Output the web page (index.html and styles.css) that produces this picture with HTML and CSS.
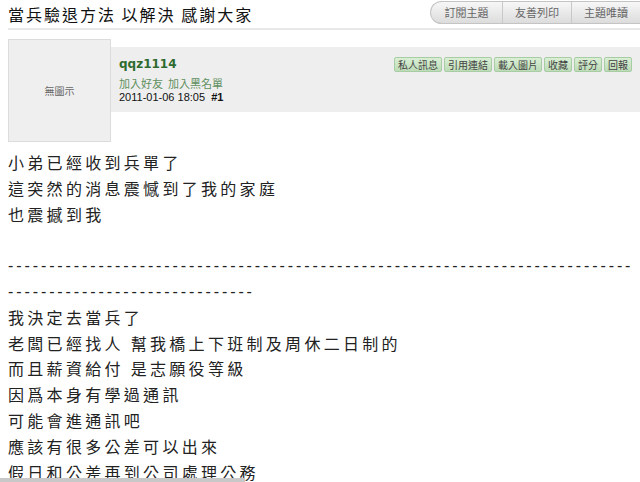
FILE: index.html
```html
<!DOCTYPE html>
<html lang="zh-Hant">
<head>
    <meta charset="UTF-8" />
    <title>當兵驗退方法 以解決 感謝大家</title>
    <link rel="stylesheet" href="styles.css">
</head>
<body>
  <header class="topbar">
    <h1 class="title">當兵驗退方法 以解決 感謝大家</h1>
    <nav class="tabs">
      <a href="#">訂閱主題</a>
      <a href="#">友善列印</a>
      <a href="#">主題唯讀</a>
    </nav>
  </header>
  <div class="rule"></div>

  <section class="post-head">
    <div class="avatar">無圖示</div>
    <div class="info">
      <div class="author">
        <div class="name">qqz1114</div>
        <div class="links"><a href="#">加入好友</a>&nbsp; <a href="#">加入黑名單</a></div>
        <div class="date">2011-01-06 18:05 &nbsp;<b>#1</b></div>
      </div>
      <div class="actions">
        <a href="#">私人訊息</a>
        <a href="#">引用連結</a>
        <a href="#">載入圖片</a>
        <a href="#">收藏</a>
        <a href="#">評分</a>
        <a href="#">回報</a>
      </div>
    </div>
  </section>

  <article class="post-body">
    <p>小弟已經收到兵單了<br>這突然的消息震憾到了我的家庭<br>也震撼到我<br><br></p>
    <p class="dashes">----------------------------------------------------------------------------------------------------------</p>
    <p>我決定去當兵了<br>老闆已經找人 幫我橋上下班制及周休二日制的<br>而且薪資給付 是志願役等級<br>因爲本身有學過通訊<br>可能會進通訊吧<br>應該有很多公差可以出來<br>假日和公差再到公司處理公務</p>
  </article>

  <div class="scrollbar"></div>
</body>
</html>
```

FILE: styles.css
```css
* {
    margin: 0;
    padding: 0;
    box-sizing: border-box;
}

body {
    font-family: "Noto Sans CJK TC", sans-serif;
    background: #fff;
    color: #222;
    padding-left: 8px;
    overflow: hidden;
}

a {
    text-decoration: none;
}

.topbar {
    display: flex;
    justify-content: space-between;
    align-items: flex-start;
    height: 28px;
}

.title {
    font-size: 16px;
    font-weight: normal;
    letter-spacing: 2px;
    line-height: 20px;
    margin-top: 4px;
    color: #111;
}

.tabs {
    display: flex;
    height: 23px;
    margin-top: 1px;
    border: 1px solid #c4c4c4;
    border-right: none;
    border-radius: 12px 0 0 12px;
    background: linear-gradient(#f7f7f7, #dcdcdc);
    overflow: hidden;
}

    .tabs a {
        font-size: 11px;
        color: #666;
        line-height: 21px;
        text-align: center;
        width: 69px;
        border-left: 1px solid #c8c8c8;
    }

        .tabs a:first-child {
            border-left: none;
            width: 71px;
        }

.rule {
    height: 2px;
    background: #e8e8e8;
}

.post-head {
    display: flex;
    margin-top: 9px;
}

.avatar {
    width: 103px;
    height: 103px;
    flex-shrink: 0;
    border: 1px solid #dcdcdc;
    background: #efefef;
    color: #666;
    font-size: 10px;
    display: flex;
    align-items: center;
    justify-content: center;
}

.info {
    flex: 1;
    display: flex;
    justify-content: space-between;
    align-items: flex-start;
    height: 65px;
    margin-top: 8px;
    background: #eee;
    padding: 9px 8px 0 8px;
}

.name {
    font-family: "DejaVu Sans", sans-serif;
    font-weight: bold;
    font-size: 12px;
    line-height: 16px;
    color: #2f6a2f;
}

.links {
    margin-top: 4px;
    font-size: 11px;
    line-height: 14px;
}

    .links a {
        color: #5f905f;
    }

.date {
    font-family: "Liberation Sans", sans-serif;
    font-size: 11px;
    line-height: 14px;
    color: #111;
}

.actions {
    display: flex;
    gap: 2px;
    margin-top: 1px;
}

    .actions a {
        font-size: 10px;
        line-height: 13px;
        padding: 0 3px;
        color: #444;
        border: 1px solid #a8cca4;
        border-radius: 2px;
        background: linear-gradient(#d9efd5, #bddcb7);
    }

.post-body {
    margin-top: 8px;
    font-size: 16px;
    line-height: 25.8px;
    letter-spacing: 3.3px;
    color: #222;
}

.dashes {
    word-break: break-all;
    font-family: "Liberation Sans", sans-serif;
    letter-spacing: 2.9px;
}

.scrollbar {
    position: fixed;
    left: 0;
    bottom: 0;
    width: 245px;
    height: 4px;
    background: #c8c8c8;
}
```
